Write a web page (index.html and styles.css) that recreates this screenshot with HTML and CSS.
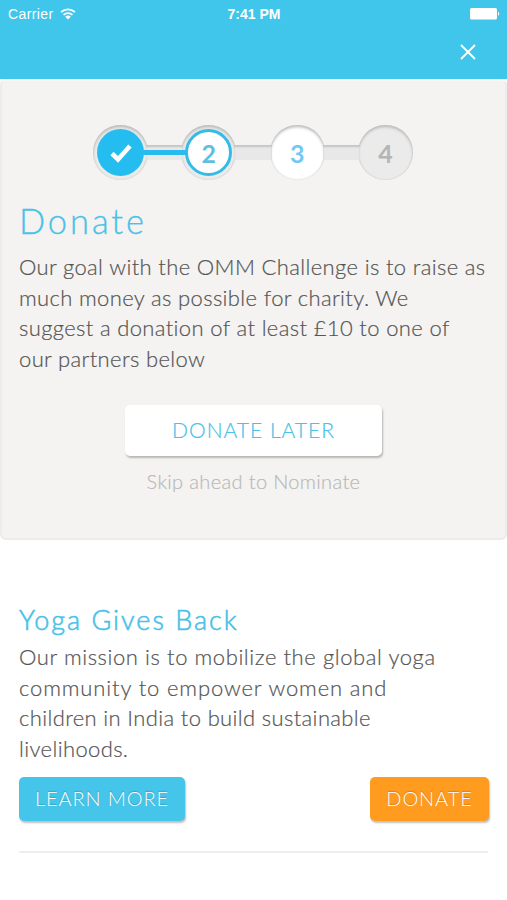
FILE: index.html
```html
<!DOCTYPE html>
<html lang="en">
<head>
    <meta charset="UTF-8">
    <meta name="viewport" content="width=device-width, initial-scale=1.0">
    <title>Donate</title>
    <link rel="stylesheet" href="styles.css">
</head>
<body>
    <header>
        <div class="status-bar">
            <div class="carrier">
                <span>Carrier</span>
                <svg class="wifi" width="16" height="12" viewBox="0 0 16 12">
                    <path d="M1 4.2a10.2 10.2 0 0 1 14 0M3.5 6.9a6.6 6.6 0 0 1 9 0" fill="none" stroke="#fff" stroke-width="1.7"/>
                    <path d="M5.2 8.7a4.2 4.2 0 0 1 5.6 0L8 11.6z" fill="#fff"/>
                </svg>
            </div>
            <div class="time">7:41 PM</div>
            <div class="battery-wrap">
                <svg width="30" height="12" viewBox="0 0 30 12">
                    <rect x="0" y="0" width="27" height="11.5" rx="1.5" fill="#fff"/>
                    <path d="M28 3.8a2.2 2.2 0 0 1 0 4z" fill="#fff"/>
                </svg>
            </div>
        </div>
        <div class="nav-bar">
            <svg class="close" width="16" height="16" viewBox="0 0 16 16">
                <path d="M1 1l14 14M15 1L1 15" stroke="#fff" stroke-width="1.9"/>
            </svg>
        </div>
    </header>

    <section class="intro">
        <div class="steps">
            <div class="step done">
                <div class="dot">
                    <svg width="24" height="20" viewBox="0 0 24 20">
                        <path d="M3 10.5l6 6L21 3" fill="none" stroke="#fff" stroke-width="4.6"/>
                    </svg>
                </div>
            </div>
            <div class="track filled"></div>
            <div class="step current"><div class="dot">2</div></div>
            <div class="track"></div>
            <div class="step next"><div class="dot">3</div></div>
            <div class="track"></div>
            <div class="step"><div class="dot">4</div></div>
        </div>
        <h1>Donate</h1>
        <p>Our goal with the OMM Challenge is to raise as<br>much money as possible for charity. We<br>suggest a donation of at least £10 to one of<br>our partners below</p>
        <button class="later-btn">DONATE LATER</button>
        <div class="skip">Skip ahead to Nominate</div>
    </section>

    <section class="charity">
        <h2>Yoga Gives Back</h2>
        <p><span class="loose">Our mission is to mobilize the global yoga</span><br><span class="looser">community to empower women and</span><br>children in India to build sustainable<br>livelihoods.</p>
        <div class="buttons">
            <button class="learn-btn">LEARN MORE</button>
            <button class="donate-btn">DONATE</button>
        </div>
    </section>
</body>
</html>
```

FILE: styles.css
```css
* {
    box-sizing: border-box;
}
body {
    margin: 0;
    background-color: #fff;
    font-family: Lato, sans-serif;
    font-weight: 300;
    color: #555;
}
header {
    height: 79px;
    background-color: #3fc6ea;
    color: #fff;
}
.status-bar {
    display: flex;
    align-items: center;
    height: 27px;
    padding: 0 7px 0 8px;
    font-family: "Liberation Sans", sans-serif;
    font-size: 14px;
    font-weight: 400;
}
.carrier, .battery-wrap {
    flex: 1;
    display: flex;
    align-items: center;
}
.carrier {
    letter-spacing: 0.4px;
}
.wifi {
    margin-left: 6px;
}
.time {
    font-weight: bold;
    font-size: 14px;
}
.battery-wrap {
    justify-content: flex-end;
}
.nav-bar {
    display: flex;
    justify-content: flex-end;
    padding: 17px 31px 0 0;
}
.intro {
    height: 461px;
    padding: 44px 17px 0;
    background-color: #f4f3f1;
    border: 2px solid #edecec;
    border-top-color: #f8f8f7;
    border-radius: 6px;
}
h1, h2, p {
    margin: 0;
}
p {
    font-size: 22px;
    line-height: 30.5px;
    letter-spacing: 0.36px;
    white-space: nowrap;
    -webkit-text-stroke: 0.2px #555;
}
.loose {
    letter-spacing: 0.58px;
}
.looser {
    letter-spacing: 0.87px;
}
button {
    display: block;
    border: none;
    border-radius: 5px;
    font-family: Lato, sans-serif;
    font-weight: 300;
    box-shadow: 1px 2px 2px rgba(0, 0, 0, 0.25);
}

/* Progress steps */
.steps {
    display: flex;
    align-items: center;
    width: 320px;
    height: 55px;
    margin-left: 74px;
}
.step {
    display: flex;
    flex: none;
    justify-content: center;
    align-items: center;
    width: 55px;
    height: 55px;
    border-radius: 50%;
    background-color: #ebebeb;
    box-shadow: inset 0 2px 3px #bbb, inset 0 0 2px #ccc;
}
.dot {
    display: flex;
    justify-content: center;
    align-items: center;
    width: 47px;
    height: 47px;
    border-radius: 50%;
    font-size: 25px;
    font-weight: 700;
    color: #b5b5b5;
}
.track {
    flex: 1;
    height: 15px;
    margin: 0 -2px;
    background-color: #e8e8e8;
    box-shadow: inset 0 2px 2px #c4c4c4;
    z-index: 1;
}
.track.filled {
    display: flex;
    align-items: center;
}
.track.filled::before {
    content: "";
    flex: 1;
    height: 5px;
    margin: 0 -3px;
    background-color: #28bbed;
}
.done .dot {
    background-color: #25bdf0;
}
.current .dot {
    background-color: #fff;
    border: 3px solid #35bbe6;
    color: #5ebfdf;
}
.next {
    background-color: #fff;
}
.next .dot {
    color: #74c9f2;
}

h1 {
    margin-top: 17px;
    font-size: 34.5px;
    font-weight: 300;
    line-height: 48px;
    letter-spacing: 2.9px;
    color: #49c1e8;
    -webkit-text-stroke: 0.3px #49c1e8;
}
.intro p {
    margin-top: 7px;
}
.later-btn {
    width: 257px;
    height: 51px;
    margin: 31px auto 0;
    padding: 0 0 2px;
    background-color: #fff;
    font-size: 21px;
    letter-spacing: 1px;
    color: #49c1e8;
    -webkit-text-stroke: 0.2px #49c1e8;
}
.skip {
    margin-top: 13px;
    font-size: 20px;
    line-height: 24px;
    letter-spacing: 0.36px;
    text-align: center;
    color: #b9b9b9;
    -webkit-text-stroke: 0.2px #b9b9b9;
}

.charity {
    margin: 0 19px;
    padding-top: 63px;
    height: 313px;
    border-bottom: 2px solid #eee;
}
h2 {
    font-size: 27px;
    font-weight: 300;
    line-height: 34px;
    letter-spacing: 2px;
    color: #49c1e8;
    -webkit-text-stroke: 0.6px #49c1e8;
}
.charity p {
    margin-top: 5px;
}
.buttons {
    display: flex;
    justify-content: space-between;
    margin: 13px -1px 0 0;
}
.learn-btn, .donate-btn {
    height: 44px;
    padding: 0 0 2px;
    font-size: 20px;
    letter-spacing: 0.9px;
    color: #fff;
    text-shadow: 0 -1px 1px rgba(0, 0, 0, 0.2);
}
.learn-btn {
    width: 166px;
    background-color: #46c5ea;
}
.donate-btn {
    width: 119px;
    background-color: #ff9b1f;
}
```
